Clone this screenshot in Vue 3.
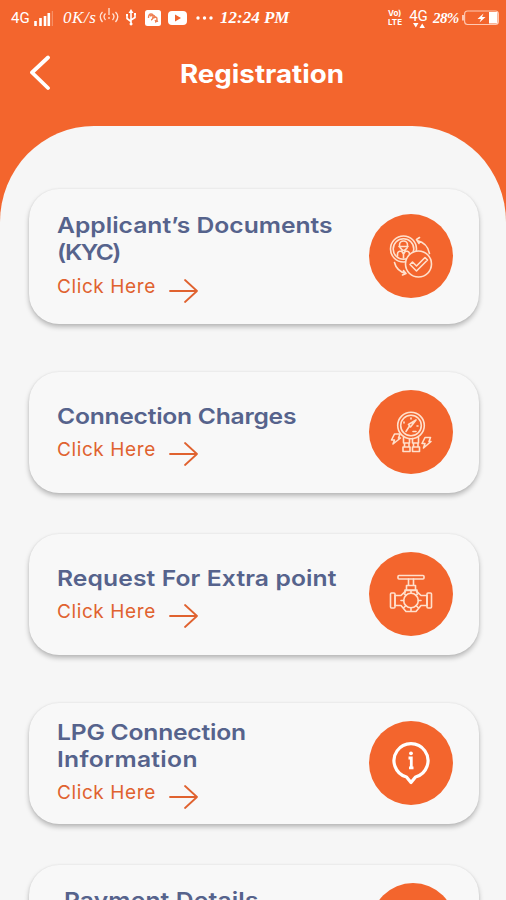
<script setup>
import { ref } from 'vue'

// track: letter spacing of each title line, px
const cards = ref([
  { id: 1, icon: 'kyc', lines: [{ text: 'Applicant’s Documents', track: 0 }, { text: '(KYC)', track: -1.4 }] },
  { id: 2, icon: 'meter', lines: [{ text: 'Connection Charges', track: -0.23 }] },
  { id: 3, icon: 'valve', lines: [{ text: 'Request For Extra point', track: 0.1 }] },
  { id: 4, icon: 'info', lines: [{ text: 'LPG Connection', track: -0.2 }, { text: 'Information', track: 0.27 }] },
  { id: 5, icon: 'pay', lines: [{ text: 'Payment Details', track: 0.13 }] }
])
</script>
<template>
  <div class="page">
    <div class="status">
      <span class="net">4G</span>
      <svg class="signal" width="20" height="18" viewBox="0 0 20 18">
        <path d="M2.500 12v5M7.500 9v8M12 7v10M15.800 4v13" stroke="#fff" stroke-width="2.600" />
        <path d="M19.300 2v15" stroke="#f79a74" stroke-width="1" />
      </svg>
      <span class="speed">0K/s</span>
      <svg class="cast" width="20" height="16" viewBox="0 0 20 16" fill="none" stroke="#ffe3d6" stroke-width="1.3">
        <path d="M3.500 4Q-1 8.500 3.500 14M6.500 5.500Q3.500 8.500 6.500 12M16.500 4Q21 8.500 16.500 14M13.500 5.500Q16.500 8.500 13.500 12M10 0v7M10 9v2" />
      </svg>
      <svg class="usb" width="12" height="18" viewBox="0 0 12 18" fill="none" stroke="#fff" stroke-width="1.6">
        <path d="M6 2v13M2 6v3.500L6 12.500M10 5v3.500L6 11" />
        <path d="M6 0l2.500 4h-5zM6 13.500a1.500 1.500 0 1 0 .1 0zM1 5h2v2H1zM9 4h2v2H9z" fill="#fff" stroke="none" />
      </svg>
      <svg class="app" width="16" height="16" viewBox="0 0 16 16">
        <rect width="16" height="16" rx="2.500" fill="#fff" />
        <path d="M3.500 8q0-4 2.500-4t2 3-2 3M5 6q4-2 5 1M8 8q4-2 4 1t-2 3M10 10q1 2 3 1" fill="none" stroke="#ee8054" stroke-width="1.400" />
      </svg>
      <svg class="tube" width="19" height="14" viewBox="0 0 19 14">
        <rect width="19" height="14" rx="4" fill="#fff" />
        <path d="M7 3.500v7l6-3.500z" fill="#f1642d" />
      </svg>
      <svg class="dots" width="17" height="4" viewBox="0 0 17 4" fill="#fff">
        <circle cx="2" cy="2" r="1.700" /><circle cx="8.500" cy="2" r="1.700" /><circle cx="15" cy="2" r="1.700" />
      </svg>
      <span class="time">12:24 PM</span>
      <span class="volte"><b>Vo)</b><b>LTE</b></span>
      <span class="data">
        <b>4G</b>
        <svg width="12" height="5" viewBox="0 0 12 5" fill="#fff"><path d="M0 0h5.500L2.800 4.500zM6.500 5H12L9.200.5z" /></svg>
      </span>
      <span class="percent">28%</span>
      <svg class="battery" width="37" height="16" viewBox="0 0 37 16">
        <rect x="2.600" y="1" width="33.800" height="13.500" rx="3" fill="none" stroke="#ffc9b3" stroke-width="1.100" />
        <path d="M1 5v5.500" stroke="#ffe3d6" stroke-width="1.600" />
        <rect x="27" y="2" width="8.500" height="11.500" fill="#fff" />
        <path d="M21.500 3.500L15.500 9h3.500l-1.500 3.500L23.500 7H20z" fill="#fff" />
      </svg>
    </div>

    <div class="navbar">
      <svg class="back" width="22" height="36" viewBox="0 0 22 36">
        <path d="M19 2.500L3 17.500l16 15.500" fill="none" stroke="#fff" stroke-width="3.800" stroke-linecap="round" stroke-linejoin="round" />
      </svg>
      <h1>Registration</h1>
    </div>

    <div class="backdrop">
      <ul class="panel">
        <li v-for="item in cards" :key="item.id" class="card" :class="item.icon">
          <div class="text">
            <h2>
              <span v-for="line in item.lines" :key="line.text" :style="{ letterSpacing: line.track + 'px' }">{{ line.text }}</span>
            </h2>
            <a v-if="item.icon !== 'pay'" class="link">
              <span>Click Here</span>
              <svg width="30" height="26" viewBox="0 0 30 26">
                <path d="M1 13h27M16 2l12 11-12 11" fill="none" stroke="#e0622f" stroke-width="1.800" stroke-linecap="round" stroke-linejoin="round" />
              </svg>
            </a>
          </div>
          <div class="circle">
            <!-- person badge with check mark -->
            <svg v-if="item.icon === 'kyc'" width="84" height="84" viewBox="0 0 84 84" class="thin">
              <path d="M48 26.500Q58.500 29 60.500 39.500M50.500 23.500l-3 2 2.500 4M25.500 48.500Q27.500 57 37 59.500M34.500 56.500l2.500 3-3.500 1.500" />
              <circle cx="34.500" cy="35" r="13" />
              <circle cx="34.500" cy="35" r="10.300" />
              <path d="M30.500 33v-2a4 4 0 0 1 8 0v2M30 32.500h9M31.500 34q3 5 6.500 0M28.500 42v-2q0-3 4-3l2 3 2-3q4 0 4 3M34.500 40v4" />
              <circle cx="49.500" cy="50" r="13" class="over" />
              <path d="M41 50.500l2.500-2.500 4 4 8.500-8.500 2.500 2.500-11 11z" />
            </svg>
            <!-- pressure gauge -->
            <svg v-if="item.icon === 'meter'" width="84" height="84" viewBox="0 0 84 84" class="thin">
              <circle cx="42" cy="35.500" r="13.300" />
              <circle cx="42" cy="35.500" r="10.300" />
              <path d="M47 30l-7.500 4.500 2 2.500zM40.500 36l-3.500 5.500M35 33v-1M42 28v1M49 36h-1M44 41.500h3" />
              <path d="M34.500 47.500v5.500h6v-4M43.500 48.500V53h6v-5.500M35.500 53v4M40 53v4M44.500 53v4M49 53v4M34 57h7v4.500h-7zM43.500 57h7v4.500h-7z" />
              <path d="M25.500 44h5.500l-1.500 4h2L24 54l1.500-4h-3zM56 47.500h5.500l-1.500 4h2L54.500 58l1.500-4.500h-3z" />
            </svg>
            <!-- pipe valve -->
            <svg v-if="item.icon === 'valve'" width="84" height="84" viewBox="0 0 84 84" class="thin">
              <rect x="29" y="23.500" width="26" height="3.500" rx="1" />
              <path d="M39.500 27v6.500h5V27M37.500 38v-4.500h9V38M36 41v-3h12v3" />
              <circle cx="42" cy="48.500" r="7.300" />
              <path d="M37 38.500h10l5 5h6v10h-6l-5 6H37l-5-6h-6v-10h6zM42 38.500V41M42 56v3.500M32 48.500h2.700M49.300 48.500H52M35 41.500l2 2M49 41.500l-2 2M35 55.500l2-2M49 55.500l-2-2" />
              <rect x="21.500" y="41" width="4.500" height="15" rx="1" />
              <rect x="58" y="41" width="4.500" height="15" rx="1" />
            </svg>
            <!-- info pin -->
            <svg v-if="item.icon === 'info'" width="84" height="84" viewBox="0 0 84 84">
              <path d="M37.500 56a17 17 0 1 1 9 0L42 61.500z" fill="none" stroke="#fff" stroke-width="3.200" stroke-linejoin="round" />
              <path d="M39.500 37h2.800v10.500M40 46.800h4.500" fill="none" stroke="#fff" stroke-width="2.800" />
              <circle cx="42" cy="32.300" r="1.900" fill="#fff" />
            </svg>
          </div>
        </li>
      </ul>
    </div>
  </div>
</template>
<style>
body {
  margin: 0;
  overflow: hidden;
}
</style>
<style scoped>
.page {
  width: 506px;
  height: 900px;
  overflow: hidden;
  background: #f6f6f6;
  font-family: Inter, "Liberation Sans", sans-serif;
}

.status {
  display: flex;
  align-items: center;
  box-sizing: border-box;
  height: 36px;
  padding-left: 11px;
  background: #f3652d;
  color: #fff;
  white-space: nowrap;
}

.status svg,
.status span {
  flex-shrink: 0;
}

.net {
  width: 22px;
  font: 15px Roboto, sans-serif;
}

.signal {
  width: 20px;
}

.speed,
.time,
.percent {
  font-family: "Liberation Serif", serif;
  font-style: italic;
  font-weight: bold;
  font-size: 17px;
}

.speed {
  width: 34px;
  margin-left: 10px;
  font-weight: normal;
  letter-spacing: 0.6px;
}

.cast {
  margin-left: 2px;
  margin-top: -4px;
}

.usb {
  margin-left: 6px;
}

.app {
  margin-left: 8px;
}

.tube {
  margin-left: 7px;
}

.dots {
  margin-left: 9px;
}

.time {
  width: 70px;
  margin-left: 7px;
}

.volte {
  display: flex;
  flex-direction: column;
  width: 16px;
  margin-left: 98px;
  font: 8px/9px Inter, sans-serif;
}

.data {
  display: flex;
  flex-direction: column;
  align-items: center;
  width: 19px;
  margin-left: 5px;
}

.data b {
  font: 15px/14px Roboto, sans-serif;
}

.percent {
  width: 26px;
  margin-left: 5px;
  font-size: 15px;
  letter-spacing: -0.6px;
}

.battery {
  margin-left: 3px;
}

.navbar {
  display: grid;
  grid-template-columns: 29px 1fr 29px;
  align-items: center;
  box-sizing: border-box;
  height: 90px;
  background: #f3652d;
}

.back {
  margin: -16px 0 0 29px;
}

h1 {
  margin: -15px 0 0 18px;
  color: #fff;
  font-size: 25px;
  font-weight: 700;
  line-height: 30px;
  text-align: center;
  transform: scaleX(1.11);
}

.backdrop {
  background: linear-gradient(#f3652d 96px, #f6f6f6 96px);
}

.panel {
  display: flex;
  flex-direction: column;
  margin: 0;
  padding: 63px 27px 0 29px;
  border-radius: 94px 94px 0 0 / 96px 96px 0 0;
  background: #f6f6f6;
  list-style: none;
}

.card {
  display: flex;
  align-items: center;
  justify-content: space-between;
  flex-shrink: 0;
  box-sizing: border-box;
  height: 121px;
  margin-bottom: 41px;
  padding: 0 26px 0 28px;
  border-radius: 30px;
  background: #f8f8f8;
  box-shadow: 0 3px 5px rgba(0, 0, 0, 0.25), 0 0 2px rgba(0, 0, 0, 0.08);
}

.card.kyc {
  height: 135px;
  margin-bottom: 48px;
}

.card.valve {
  margin-bottom: 48px;
}

.card.pay {
  padding-right: 24px;
}

.text {
  padding-top: 5px;
}

.card.kyc .text {
  padding-top: 3px;
}

.card.info .text {
  padding-top: 2px;
}

.card.pay .text {
  align-self: flex-start;
  padding: 22px 0 0 7px;
}

h2 {
  display: flex;
  flex-direction: column;
  margin: 0;
  color: #56638c;
  font-size: 22px;
  font-weight: 600;
  line-height: 27px;
  white-space: nowrap;
}

/* wide letterforms */
h2 span {
  transform: scaleX(1.12);
  transform-origin: left;
}

.link {
  display: flex;
  align-items: center;
  margin-top: 3px;
  color: #e0622f;
  font-size: 19px;
  line-height: 30px;
  letter-spacing: 0.6px;
}

.card.kyc .link {
  margin-top: 4px;
}

.link svg {
  margin: 8px 0 0 13px;
}

.circle {
  flex-shrink: 0;
  width: 84px;
  height: 84px;
  margin-bottom: 2px;
  border-radius: 50%;
  background: #f3652d;
}

.circle svg {
  display: block;
}

.thin {
  fill: none;
  stroke: #ffe0cc;
  stroke-width: 1.6;
  stroke-linecap: round;
  stroke-linejoin: round;
}

.thin .over {
  fill: #f3652d;
}
</style>
